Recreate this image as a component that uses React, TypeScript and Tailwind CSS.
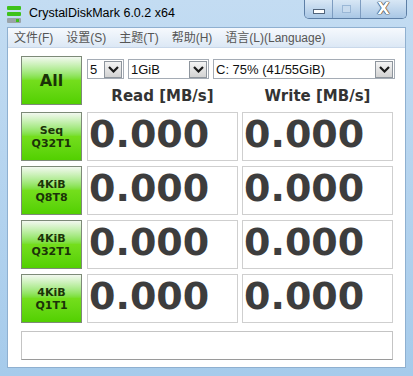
import React from 'react';

const rows = [
  ['Seq', 'Q32T1'],
  ['4KiB', 'Q8T8'],
  ['4KiB', 'Q32T1'],
  ['4KiB', 'Q1T1'],
];

const menus = ['文件(F)', '设置(S)', '主题(T)', '帮助(H)', '语言(L)(Language)'];

function Chevron() {
  return (
    <svg width="11" height="7" viewBox="0 0 11 7">
      <path d="M1 1 L5.5 5.5 L10 1" fill="none" stroke="#1a1a1a" strokeWidth="2.2" />
    </svg>
  );
}

function Combo({ label, className }: { label: string; className: string }) {
  return (
    <div
      className={`h-[20px] flex items-center justify-between border border-[#a5acb5] bg-white pl-[2px] pr-[1px] ${className}`}
    >
      <span className="text-[13px] leading-none text-[#111] font-['Liberation_Sans',sans-serif]">
        {label}
      </span>
      <div className="w-[18px] h-[17px] flex items-center justify-center border border-[#8e959d] bg-gradient-to-b from-[#f4f4f4] to-[#d3d3d3]">
        <Chevron />
      </div>
    </div>
  );
}

function GreenButton({ children, className }: { children: React.ReactNode; className: string }) {
  return (
    <div
      className={`w-[61px] flex flex-col items-center justify-center border border-[#7d8a78] bg-gradient-to-b from-[#f2f8ef] via-[#74de1c] to-[#52d000] text-[#1b3308] font-bold font-['DejaVu_Sans',sans-serif] ${className}`}
    >
      {children}
    </div>
  );
}

function Cell() {
  return (
    <div className="w-[151px] h-[49px] border border-[#cfcfcf] bg-white flex items-center pl-[1px] pb-[6px]">
      <span className="text-[38px] leading-[38px] font-bold text-[#3d3d3d] font-['DejaVu_Sans',sans-serif]">
        0.000
      </span>
    </div>
  );
}

export default function App() {
  return (
    <div className="w-[413px] h-[376px] flex flex-col bg-gradient-to-b from-[#c3dcf2] to-[#a6cbeb] overflow-hidden">
      {/* title bar */}
      <div className="h-[27px] flex items-start relative">
        <div className="mt-[6px] ml-[7px] w-[14px] flex flex-col gap-[2px]">
          <div className="h-[4px] bg-[#3ec21a] rounded-[1px]" />
          <div className="h-[4px] bg-[#3ec21a] rounded-[1px]" />
          <div className="h-[5px] bg-[#9aa3a8] rounded-[1px] relative">
            <div className="absolute right-[2px] top-[1px] w-[3px] h-[3px] bg-[#3ec21a]" />
          </div>
        </div>
        <span className="ml-[8px] mt-[6px] text-[12.5px] leading-[14px] text-black font-['Liberation_Sans',sans-serif]">
          CrystalDiskMark 6.0.2 x64
        </span>
        <div className="absolute right-[6px] top-0 flex h-[19px] border border-t-0 border-[#5d7fa6] rounded-b-[5px] overflow-hidden">
          <div className="w-[28px] flex items-center justify-center bg-gradient-to-b from-[#d8e7f5] to-[#a9c7e5] border-r border-[#7d9cc0]">
            <div className="w-[12px] h-[5px] bg-white border border-[#51647b] mt-[5px]" />
          </div>
          <div className="w-[28px] flex items-center justify-center bg-gradient-to-b from-[#d8e7f5] to-[#a9c7e5] border-r border-[#7d9cc0]">
            <div className="w-[9px] h-[8px] bg-[#c8dbee] border border-[#9ab7d6]" />
          </div>
          <div className="w-[45px] flex items-center justify-center bg-gradient-to-b from-[#d8e7f5] to-[#a9c7e5]">
            <span className="text-[16px] leading-none font-bold text-white font-['DejaVu_Sans',sans-serif] [text-shadow:0_0_1px_#222,0_0_1px_#222,0_0_1px_#222]">
              X
            </span>
          </div>
        </div>
      </div>

      {/* client */}
      <div className="mx-[7px] mb-[8px] flex-1 flex flex-col border border-[#8fb0d0]">
        <div className="h-[20px] flex items-center gap-[13px] pl-[6px] bg-gradient-to-b from-[#f6f9fd] to-[#dce8f5] border-b border-[#c9d8ea]">
          {menus.map((m) => (
            <span
              key={m}
              className="text-[12px] leading-none text-[#555] font-['Liberation_Sans','Noto_Sans_CJK_SC',sans-serif]"
            >
              {m}
            </span>
          ))}
        </div>

        <div className="flex-1 bg-white pl-[13px] pt-[8px] flex flex-col">
          <div className="flex gap-[5px]">
            <GreenButton className="h-[49px] text-[16px]">All</GreenButton>
            <div className="flex flex-col">
              <div className="flex mt-[3px]">
                <Combo label="5" className="w-[37px]" />
                <Combo label="1GiB" className="w-[81px] ml-[4px]" />
                <Combo label="C: 75% (41/55GiB)" className="w-[182px] ml-[4px]" />
              </div>
              <div className="flex gap-[4px] h-[33px] items-center pt-[1px] text-[15px] font-bold text-[#333] font-['DejaVu_Sans',sans-serif]">
                <div className="w-[151px] text-center">Read [MB/s]</div>
                <div className="w-[151px] text-center">Write [MB/s]</div>
              </div>
            </div>
          </div>

          <div className="flex flex-col gap-[5px]">
            {rows.map(([a, b], i) => (
              <div key={i} className="flex gap-[5px]">
                <GreenButton className="h-[49px] text-[11px] leading-[13px]">
                  <span>{a}</span>
                  <span>{b}</span>
                </GreenButton>
                <div className="flex gap-[4px]">
                  <Cell />
                  <Cell />
                </div>
              </div>
            ))}
          </div>

          <div className="mt-[8px] w-[372px] h-[29px] border border-[#c4c4c4] border-b-[#9a9a9a] bg-white" />
        </div>
      </div>
    </div>
  );
}
